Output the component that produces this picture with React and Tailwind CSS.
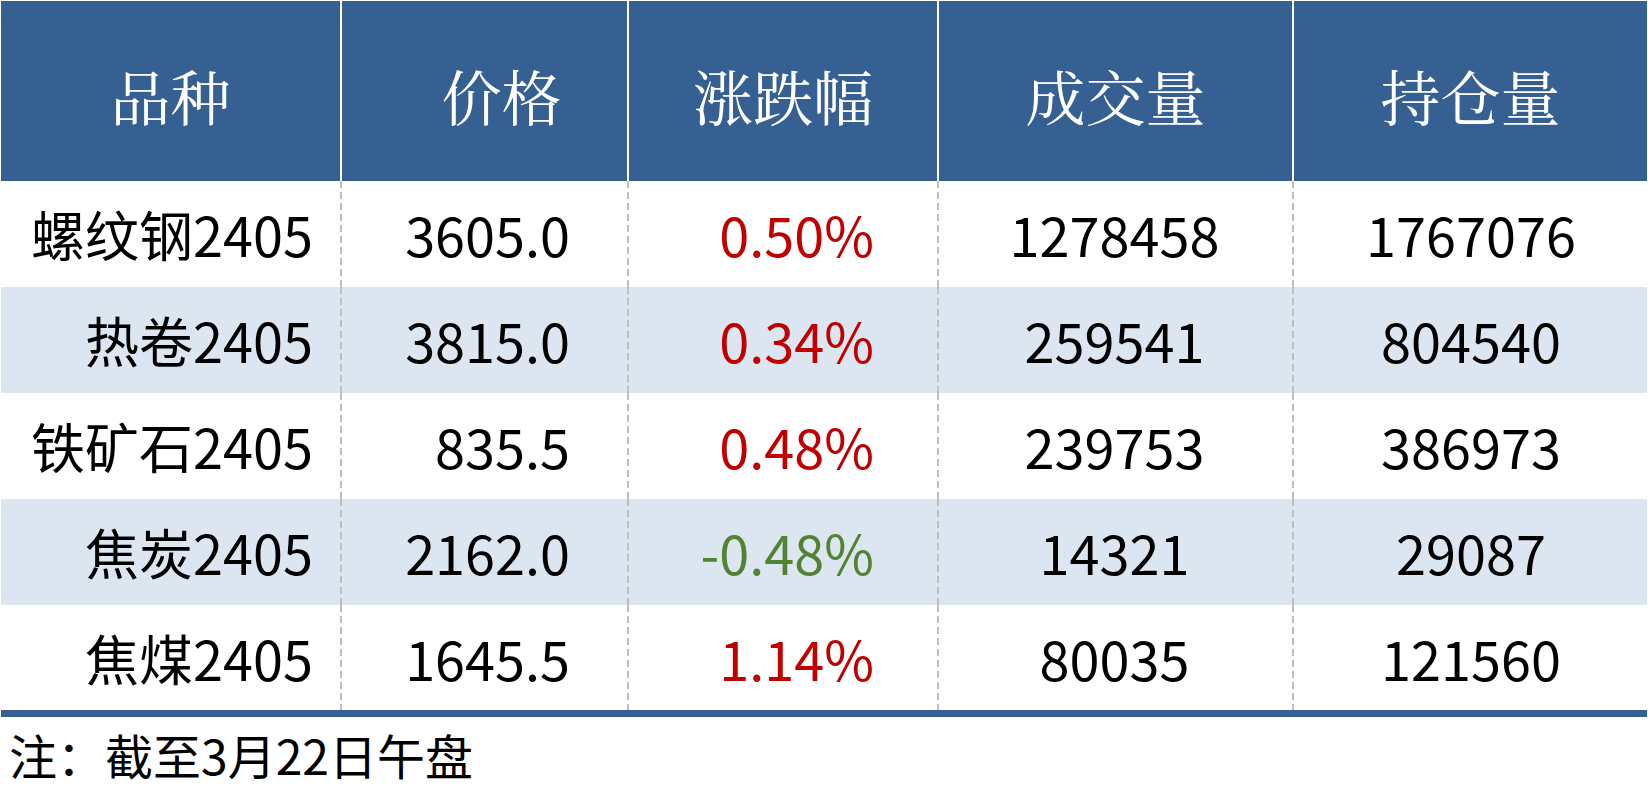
import React from "react";

const rows = [
  { name: "螺纹钢2405", price: "3605.0", chg: "0.50%", up: true, vol: "1278458", oi: "1767076" },
  { name: "热卷2405", price: "3815.0", chg: "0.34%", up: true, vol: "259541", oi: "804540" },
  { name: "铁矿石2405", price: "835.5", chg: "0.48%", up: true, vol: "239753", oi: "386973" },
  { name: "焦炭2405", price: "2162.0", chg: "-0.48%", up: false, vol: "14321", oi: "29087" },
  { name: "焦煤2405", price: "1645.5", chg: "1.14%", up: true, vol: "80035", oi: "121560" },
];

const sans = "font-['Noto_Sans_CJK_SC','Noto_Sans',sans-serif]";
const serif = "font-['Noto_Serif_CJK_SC','Source_Han_Serif_SC','AR_PL_UMing_CN','Noto_Sans_CJK_SC',serif]";
const dash =
  "bg-[linear-gradient(to_bottom,#bfbfbf_0_7px,transparent_7px)] bg-[length:2px_11px] bg-repeat-y";

export default function App() {
  return (
    <div className="w-[1648px] h-[791px] bg-white px-px pt-px overflow-hidden">
      {/* header */}
      <div className={`grid grid-cols-[339px_287px_310px_355px_1fr] h-[180px] bg-[#366092] text-white text-[60px] leading-none ${serif}`}>
        <div className="flex items-center justify-center pt-[8px]">品种</div>
        <div className="flex items-center justify-center border-l-2 border-white pl-[34px] pt-[8px]">价格</div>
        <div className="flex items-center justify-center border-l-2 border-white pt-[8px]">涨跌幅</div>
        <div className="flex items-center justify-center border-l-2 border-white pt-[8px]">成交量</div>
        <div className="flex items-center justify-center border-l-2 border-white pt-[8px]">持仓量</div>
      </div>
      {/* body */}
      <div className={`${sans} text-[54px] leading-none text-black`}>
        {rows.map((r, i) => {
          const shade = i % 2 === 1 ? "bg-[#dce6f1]" : "bg-white";
          const h = i === 4 ? "h-[105px]" : "h-[106px]";
          return (
            <div key={i} className={`grid grid-cols-[339px_287px_310px_355px_1fr] ${h}`}>
              <div className={`flex items-center justify-end pr-[27px] ${shade}`}>{r.name}</div>
              <div className={`flex items-center justify-end pr-[57px] ${shade} ${dash}`}>{r.price}</div>
              <div
                className={`flex items-center justify-end pr-[63px] ${shade} ${dash} ${
                  r.up ? "text-[#c00000]" : "text-[#548235]"
                }`}
              >
                {r.chg}
              </div>
              <div className={`flex items-center justify-center ${shade} ${dash}`}>{r.vol}</div>
              <div className={`flex items-center justify-center pl-[3px] ${shade} ${dash}`}>{r.oi}</div>
            </div>
          );
        })}
      </div>
      <div className="h-[7px] bg-[#366092]" />
      <div className={`${sans} text-[48px] leading-none text-black pl-[8px] pt-[13px]`}>注：截至3月22日午盘</div>
    </div>
  );
}
